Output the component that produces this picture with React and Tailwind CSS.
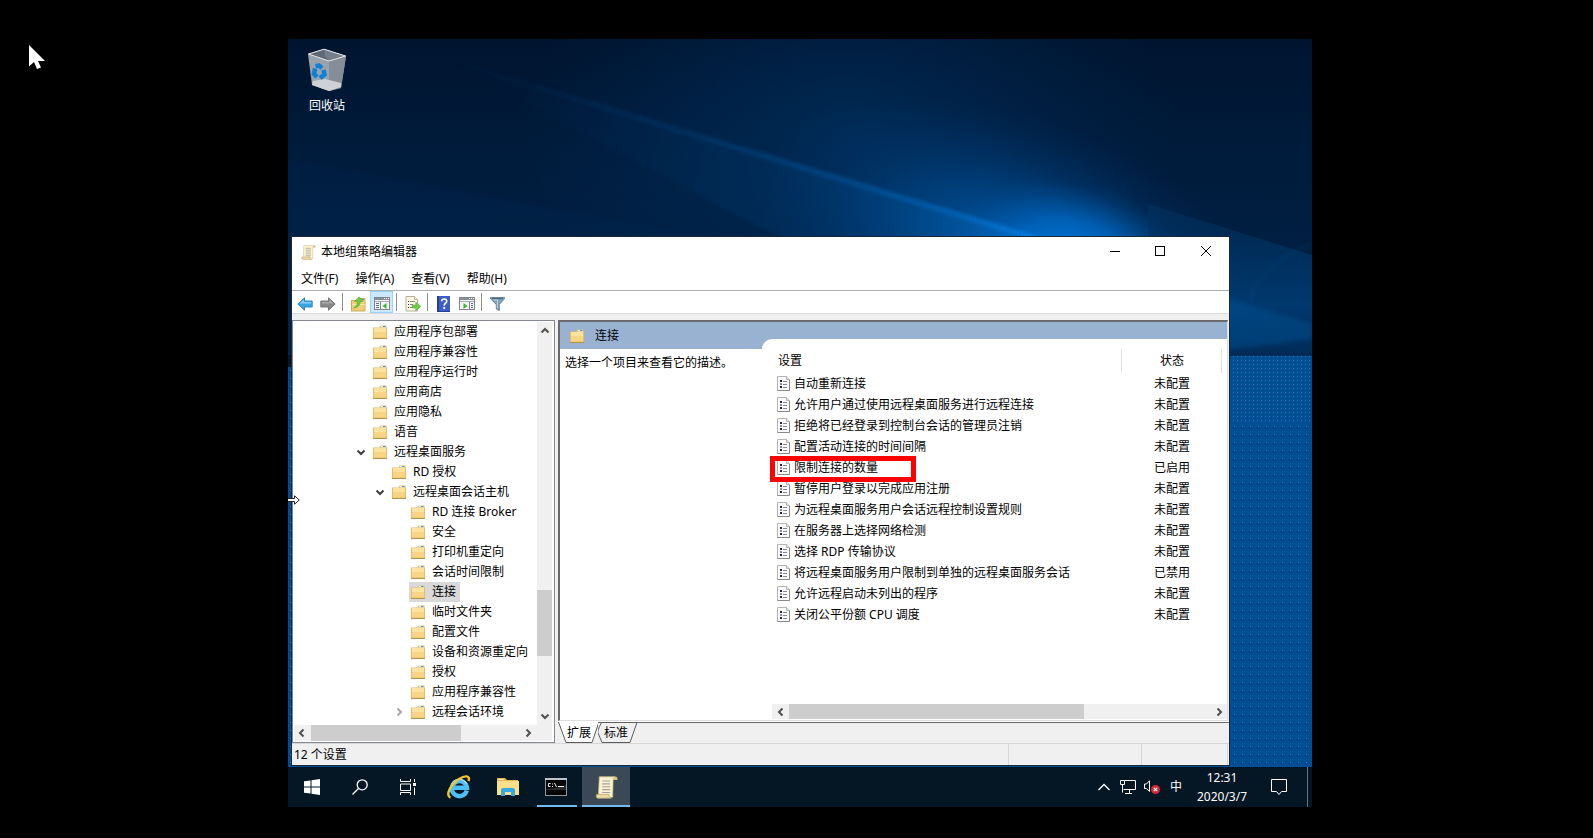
import React from "react";

const tree = [
  { label: "应用程序包部署", level: 1 },
  { label: "应用程序兼容性", level: 1 },
  { label: "应用程序运行时", level: 1 },
  { label: "应用商店", level: 1 },
  { label: "应用隐私", level: 1 },
  { label: "语音", level: 1 },
  { label: "远程桌面服务", level: 1, chevron: "open" },
  { label: "RD 授权", level: 2 },
  { label: "远程桌面会话主机", level: 2, chevron: "open" },
  { label: "RD 连接 Broker", level: 3 },
  { label: "安全", level: 3 },
  { label: "打印机重定向", level: 3 },
  { label: "会话时间限制", level: 3 },
  { label: "连接", level: 3, selected: true },
  { label: "临时文件夹", level: 3 },
  { label: "配置文件", level: 3 },
  { label: "设备和资源重定向", level: 3 },
  { label: "授权", level: 3 },
  { label: "应用程序兼容性", level: 3 },
  { label: "远程会话环境", level: 3, chevron: "closed" },
];

const settings = [
  ["自动重新连接", "未配置"],
  ["允许用户通过使用远程桌面服务进行远程连接", "未配置"],
  ["拒绝将已经登录到控制台会话的管理员注销", "未配置"],
  ["配置活动连接的时间间隔", "未配置"],
  ["限制连接的数量", "已启用"],
  ["暂停用户登录以完成应用注册", "未配置"],
  ["为远程桌面服务用户会话远程控制设置规则", "未配置"],
  ["在服务器上选择网络检测", "未配置"],
  ["选择 RDP 传输协议", "未配置"],
  ["将远程桌面服务用户限制到单独的远程桌面服务会话", "已禁用"],
  ["允许远程启动未列出的程序", "未配置"],
  ["关闭公平份额 CPU 调度", "未配置"],
];

const indent = { 1: "pl-[62px]", 2: "pl-[81px]", 3: "pl-[100px]" };

function Wallpaper() {
  return (
    <svg className="absolute inset-0 h-full w-full" viewBox="0 0 1024 768" preserveAspectRatio="none" aria-hidden="true">
      <defs>
        <linearGradient id="sky" x1="0" y1="0" x2="0" y2="1">
          <stop offset="0" stopColor="#00142f" />
          <stop offset="0.35" stopColor="#001b3b" />
          <stop offset="1" stopColor="#00244a" />
        </linearGradient>
        <radialGradient id="core" gradientUnits="userSpaceOnUse" cx="0" cy="0" r="1" gradientTransform="translate(785 212) rotate(12) scale(120 68)">
          <stop offset="0" stopColor="#0078d8" />
          <stop offset="0.45" stopColor="#0068c4" stopOpacity="0.75" />
          <stop offset="1" stopColor="#004c94" stopOpacity="0" />
        </radialGradient>
        <radialGradient id="glow" gradientUnits="userSpaceOnUse" cx="0" cy="0" r="1" gradientTransform="translate(725 205) rotate(18) scale(260 130)">
          <stop offset="0" stopColor="#0062b8" stopOpacity="0.85" />
          <stop offset="0.45" stopColor="#004a8e" stopOpacity="0.6" />
          <stop offset="1" stopColor="#003068" stopOpacity="0" />
        </radialGradient>
        <radialGradient id="wide" gradientUnits="userSpaceOnUse" cx="0" cy="0" r="1" gradientTransform="translate(560 90) scale(330 200)">
          <stop offset="0" stopColor="#003a70" stopOpacity="0.5" />
          <stop offset="1" stopColor="#003468" stopOpacity="0" />
        </radialGradient>
        <linearGradient id="beam" gradientUnits="userSpaceOnUse" x1="150" y1="18" x2="760" y2="203">
          <stop offset="0" stopColor="#0a4a86" stopOpacity="0" />
          <stop offset="0.4" stopColor="#0a4f90" stopOpacity="0.35" />
          <stop offset="0.75" stopColor="#0664b4" stopOpacity="0.75" />
          <stop offset="1" stopColor="#0a84ec" />
        </linearGradient>
        <linearGradient id="lower" gradientUnits="userSpaceOnUse" x1="0" y1="190" x2="0" y2="317">
          <stop offset="0" stopColor="#00315f" />
          <stop offset="0.6" stopColor="#004888" />
          <stop offset="1" stopColor="#003060" />
        </linearGradient>
        <pattern id="dots" width="8" height="8" patternUnits="userSpaceOnUse">
          <rect width="8" height="8" fill="#004f94" />
          <rect x="1" y="4" width="1" height="1" fill="#002a5e" />
          <rect x="2" y="3" width="1" height="1" fill="#3580c4" />
          <rect x="3" y="4" width="1" height="1" fill="#003f7c" />
        </pattern>
        <pattern id="fine" width="4" height="4" patternUnits="userSpaceOnUse">
          <rect width="4" height="4" fill="#004f94" />
          <rect x="1" y="1" width="1" height="1" fill="#2a74b8" />
          <rect x="3" y="3" width="1" height="1" fill="#004382" />
        </pattern>
        <filter id="soft" x="-10%" y="-50%" width="120%" height="200%">
          <feGaussianBlur stdDeviation="2" />
        </filter>
      </defs>
      <rect width="1024" height="768" fill="url(#dots)" />
      <rect x="940" y="310" width="84" height="72" fill="url(#fine)" />
      <rect width="1024" height="317" fill="url(#sky)" />
      <rect y="316" width="8" height="12" fill="#00172f" />
      <rect width="1024" height="317" fill="url(#wide)" />
      <rect x="400" width="624" height="317" fill="url(#glow)" />
      <rect x="600" width="424" height="317" fill="url(#core)" />
      <path d="M150 18 L760 203 L500 203 Z" fill="url(#beam)" opacity="0.25" filter="url(#soft)" />
      <path d="M150 18 L760 203" stroke="url(#beam)" strokeWidth="4" filter="url(#soft)" />
      <path d="M0 120 L430 200 L0 200 Z" fill="#002c58" opacity="0.2" filter="url(#soft)" />
      <path d="M860 165 L1024 216 L1040 340 L860 340 Z" fill="url(#lower)" opacity="0.6" clipPath="inset(0)" />
      <path d="M930 257 L1024 285 L1024 300 L930 312 Z" fill="#00569c" opacity="0.4" filter="url(#soft)" />
      <path d="M1024 205 Q975 222 962 262" stroke="#0a5a9c" strokeWidth="2" fill="none" opacity="0.25" filter="url(#soft)" />
      <rect x="940" y="317" width="84" height="65" fill="url(#fine)" />
    </svg>
  );
}

function Folder() {
  return (
    <svg className="h-[14px] w-[14px] shrink-0" viewBox="0 0 14 14" aria-hidden="true">
      <path d="M0 2.500h6.500L7.500.500H13.500V2.500H14V13.500H0z" fill="#dfbe72" />
      <path d="M8 1h5v1.500H7.500z" fill="#f4eccb" />
      <path d="M10 1.500h2.500" stroke="#3f97d8" />
      <rect x="1" y="3" width="12" height="5" fill="#fde2a0" />
      <rect x="1" y="7" width="12" height="5.500" fill="#f8d584" />
      <path d="M0 13.500h14" stroke="#b9934a" />
    </svg>
  );
}

function Scroll({ className }) {
  return (
    <svg className={className} viewBox="0 0 16 16" aria-hidden="true">
      <path d="M3 .5H14L12.600 3 12.300 14.800H2.300Z" fill="#fbf1cc" stroke="#c9b984" strokeWidth="0.5" />
      <path d="M13 .5h2q.8.5.6 2.200h-3.100z" fill="#d6c285" />
      <path d="M1 12.800h8.700q-.3 1.800 1.600 2.700H1.700Q.4 14.500 1 12.800z" fill="#ead9a0" stroke="#b8a46a" strokeWidth="0.5" />
      <path d="M5 3.500h5.500M5 5.500h5.500M5 7.500h5.500M5 9.500h5.500M5 11.500h5.500" stroke="#a3a39a" strokeWidth="0.8" />
    </svg>
  );
}

function PolicyIcon() {
  return (
    <svg className="h-[15px] w-[13px] shrink-0" viewBox="0 0 13 15" aria-hidden="true">
      <path d="M.5.5h9l3 3v11H.5z" fill="#fafafa" stroke="#b4b4b4" />
      <path d="M9.500.5v3h3" fill="#e4e4e4" stroke="#b4b4b4" />
      <path d="M12.500 4v10.500H.5" fill="none" stroke="#8a8a8a" />
      <path d="M3 4h2v2H3zM3 10h2v2H3z" fill="#23233a" />
      <path d="M3 7h2v2H3z" fill="#8c8c9c" />
      <path d="M6 5.500h4M6 8.500h4M6 11.500h4" stroke="#85859a" />
    </svg>
  );
}

function Arrow({ dir, color = "#505050" }) {
  const d = {
    up: "M1.500 6.500 5 3l3.500 3.500",
    down: "M1.500 3.500 5 7l3.500-3.500",
    left: "M6.500 1.500 3 5l3.500 3.500",
    right: "M3.500 1.500 7 5 3.500 8.500",
  }[dir];
  return (
    <svg className="h-[10px] w-[10px]" viewBox="0 0 10 10" fill="none" stroke={color} strokeWidth="2" aria-hidden="true">
      <path d={d} />
    </svg>
  );
}

function Separator() {
  return <span className="mr-1 ml-[3px] h-[18px] w-px bg-[#8d8d8d]" />;
}

function ToolButton({ label, active, children }) {
  return (
    <button
      aria-label={label}
      className={
        active
          ? "flex h-[22px] w-[23px] items-center justify-center border border-[#99d1ff] bg-[#cce8ff] pt-[2px]"
          : "flex h-[22px] w-[23px] items-center justify-center pt-[3px]"
      }
    >
      {children}
    </button>
  );
}

function PaneIcon({ flip }) {
  return (
    <svg className="h-[13px] w-[16px]" viewBox="0 0 16 13" aria-hidden="true">
      <rect x=".5" y=".5" width="15" height="12" fill="#f4f4f4" stroke="#82868c" />
      <rect x="1" y="1" width="14" height="2" fill="#8a9099" />
      <path d="M10 1.500h1M12 1.500h1M14 1.500h1" stroke="#fff" />
      <path d="M1 4.500h14" stroke="#a8adb4" />
      <path d={flip ? "M10.500 5v7" : "M6.500 5v7"} stroke="#82868c" />
      <path d={flip ? "M12 6.500h2M12 8.500h2M12 10.500h2" : "M2 6.500h3M2 8.500h3M2 10.500h3"} stroke="#5b6f95" />
      <path d={flip ? "M4.500 6v6l4-3z" : "M12.500 6v6l-4-3z"} fill="#3fb52f" />
    </svg>
  );
}

function Toolbar() {
  return (
    <div className="flex h-[23px] shrink-0 items-center border-b border-[#d9d9d9] bg-white pl-px">
      <ToolButton label="后退">
        <svg className="h-[14px] w-[16px]" viewBox="0 0 16 14" aria-hidden="true">
          <path d="M.8 7 7.500.8V4h7.700v6H7.500v3.200z" fill="#35a5ea" stroke="#3b86b8" />
          <path d="M2.500 6.500 6.700 2.600V5h7.500v1.500z" fill="#86d0fa" />
        </svg>
      </ToolButton>
      <ToolButton label="前进">
        <svg className="h-[14px] w-[16px]" viewBox="0 0 16 14" aria-hidden="true">
          <path d="M15.200 7 8.500.8V4H.8v6h7.700v3.200z" fill="#8a8a8a" stroke="#757575" />
          <path d="M13.500 6.500 9.300 2.600V5H1.800v1.500z" fill="#aaa" />
        </svg>
      </ToolButton>
      <Separator />
      <ToolButton label="上一级">
        <svg className="h-[16px] w-[15px]" viewBox="0 0 15 16" aria-hidden="true">
          <path d="M.5 4.500h6l1.500-2h6v12.500H.5z" fill="#f0cf7c" stroke="#cfa95a" />
          <path d="M1 8.500h13" stroke="#fae6ac" />
          <path d="M10.500 3.500H13" stroke="#3f97d8" />
          <path d="M2.500 12Q6.500 10 6.300 5.500H3.500L8 .8l4 4.700H9.500Q9 11 2.500 12z" fill="#6ccc3c" stroke="#45a02a" strokeWidth=".5" />
        </svg>
      </ToolButton>
      <ToolButton label="显示/隐藏控制台树" active>
        <PaneIcon />
      </ToolButton>
      <Separator />
      <ToolButton label="导出列表">
        <svg className="h-[16px] w-[16px]" viewBox="0 0 16 16" aria-hidden="true">
          <path d="M1 .5h8.500l3 3v11.500H1z" fill="#fbf8e4" stroke="#b4b09a" />
          <path d="M9.500.5v3h3" fill="#fff" stroke="#b4b09a" />
          <path d="M3 5.500h1M3 8.500h1M3 11.500h1" stroke="#333" />
          <path d="M5 5.500h5M5 8.500h3M5 11.500h3" stroke="#8b8b8b" />
          <path d="M7.500 9h3.300V6.300L15.700 10.500 10.800 14.700V12H7.500z" fill="#6fd048" stroke="#4ba836" strokeWidth=".6" />
        </svg>
      </ToolButton>
      <Separator />
      <ToolButton label="帮助">
        <svg className="h-[16px] w-[13px]" viewBox="0 0 13 16" aria-hidden="true">
          <rect width="13" height="16" fill="#3b5cc9" />
          <rect width="2" height="16" fill="#243f96" />
          <path d="M0 15.500h13" stroke="#243f96" />
          <path d="M4.700 5.200Q4.700 3 7.200 3t2.500 2.200Q9.700 6.500 8.300 7.500 7.200 8.300 7.200 9.800" fill="none" stroke="#fff" strokeWidth="1.700" />
          <rect x="6.300" y="11" width="1.900" height="2" fill="#fff" />
        </svg>
      </ToolButton>
      <ToolButton label="显示/隐藏操作窗格">
        <PaneIcon flip />
      </ToolButton>
      <Separator />
      <ToolButton label="筛选器">
        <svg className="h-[14px] w-[15px]" viewBox="0 0 15 14" aria-hidden="true">
          <path d="M.5.500h14v1.300L9.300 7.500v6l-3-1.500V7.500L.5 1.800z" fill="#7fa0b8" stroke="#56768e" strokeWidth=".8" />
          <path d="M2 1.500h11" stroke="#48657e" />
          <path d="M3.500 3h4L7.300 11.500" fill="none" stroke="#bcd4e4" />
        </svg>
      </ToolButton>
    </div>
  );
}

function TreePane() {
  return (
    <nav className="flex w-[263px] shrink-0 flex-col border border-[#828790] bg-white pr-[2px] pb-px">
      <div className="flex flex-1">
        <ul className="flex-1 pt-px">
          {tree.map((node, i) => (
            <li key={i} className={`flex h-5 items-center whitespace-nowrap ${indent[node.level]}`}>
              {node.chevron ? (
                <button className="flex w-3 shrink-0 justify-center" aria-label={`展开或折叠 ${node.label}`}>
                  <Arrow dir={node.chevron === "open" ? "down" : "right"} color={node.chevron === "open" ? "#404040" : "#a6a6a6"} />
                </button>
              ) : (
                <span className="w-3 shrink-0" />
              )}
              <button className={`ml-1 flex h-5 items-center gap-[7px] pr-1 pl-[2px] ${node.selected ? "bg-[#d9d9d9]" : ""}`}>
                <Folder />
                {node.label}
              </button>
            </li>
          ))}
        </ul>
        <div className="mt-px flex w-[15px] shrink-0 flex-col items-center bg-[#f0f0f0]">
          <button aria-label="向上滚动" className="flex h-[18px] items-center"><Arrow dir="up" /></button>
          <div className="flex w-full flex-1 flex-col">
            <div className="flex-[249]" />
            <div className="flex-[65] bg-[#cdcdcd]" />
            <div className="flex-[50]" />
          </div>
          <button aria-label="向下滚动" className="flex h-[19px] items-center"><Arrow dir="down" /></button>
        </div>
      </div>
      <div className="ml-px flex h-4 shrink-0 bg-[#f0f0f0]">
        <button aria-label="向左滚动" className="flex w-4 items-center justify-center"><Arrow dir="left" /></button>
        <div className="flex flex-1">
          <div className="ml-px flex-[150] bg-[#cdcdcd]" />
          <div className="flex-[58]" />
        </div>
        <button aria-label="向右滚动" className="mr-4 flex w-[17px] items-center justify-center"><Arrow dir="right" /></button>
      </div>
    </nav>
  );
}

function SettingsTable() {
  return (
    <table className="mt-[10px] w-full table-fixed border-collapse">
      <thead>
        <tr className="h-6">
          <th className="border-r border-[#e2e2e2] pl-4 text-left font-normal">设置</th>
          <th className="w-[100px] border-r border-[#e2e2e2] pl-[2px] text-center font-normal">状态</th>
          <th className="w-[6px]" />
        </tr>
      </thead>
      <tbody>
        {settings.map(([name, state]) => (
          <tr key={name} className="h-[21px]">
            <td className="relative p-0 pl-[15px]">
              <span className="flex items-center gap-1 whitespace-nowrap">
                <PolicyIcon />
                {name}
              </span>
              {name === "限制连接的数量" && (
                <span className="absolute -top-px left-2 z-10 h-[26px] w-[146px] border-[5px] border-[#fe0000]" />
              )}
            </td>
            <td className="p-0 pl-[2px] text-center">{state}</td>
            <td />
          </tr>
        ))}
      </tbody>
    </table>
  );
}

function DetailPane() {
  return (
    <section className="ml-[3px] flex min-w-0 flex-1 flex-col">
      <div className="mr-px flex flex-1 border-t-2 border-r border-b border-l-2 border-t-[#696969] border-r-[#dcdcdc] border-b-[#dcdcdc] border-l-[#696969] bg-white">
        <div className="flex w-[202px] shrink-0 flex-col">
          <h2 className="flex h-[27px] items-center gap-[11px] bg-[#99b2d1] pl-[10px]">
            <Folder />
            连接
          </h2>
          <p className="pt-1 pl-[5px]">选择一个项目来查看它的描述。</p>
        </div>
        <div className="flex min-w-0 flex-1 flex-col bg-[#99b2d1] pt-[17px]">
          <div className="flex flex-1 flex-col rounded-tl-[10px] bg-white">
            <SettingsTable />
            <div className="mt-auto mb-px ml-[10px] flex h-[15px] bg-[#f0f0f0]">
              <button aria-label="向左滚动" className="flex w-[17px] items-center justify-center"><Arrow dir="left" /></button>
              <div className="flex flex-1">
                <div className="flex-[295] bg-[#cdcdcd]" />
                <div className="flex-[126]" />
              </div>
              <button aria-label="向右滚动" className="flex w-[17px] items-center justify-center"><Arrow dir="right" /></button>
            </div>
          </div>
        </div>
      </div>
      <div className="h-px shrink-0 bg-white" />
      <div className="flex h-[21px] shrink-0 border-t border-[#696969]">
        <button className="relative -mt-px h-[21px] w-10">
          <svg className="absolute inset-0 h-full w-full" viewBox="0 0 40 21" aria-hidden="true">
            <path d="M0 0 8 20.500h26L40 0z" fill="#fff" />
            <path d="M.5 0 8 20.500h26L41 0" fill="none" stroke="#5c5c5c" />
          </svg>
          <span className="relative pl-[2px]">扩展</span>
        </button>
        <button className="relative -mt-px h-[21px] w-10">
          <svg className="absolute inset-0 h-full w-full" viewBox="0 0 40 21" aria-hidden="true">
            <path d="M3.500.5Q-1 9 0 11l4 9.500h28L39 .5z" fill="#f0f0f0" stroke="#5c5c5c" />
          </svg>
          <span className="relative pr-1">标准</span>
        </button>
      </div>
    </section>
  );
}

function EditorWindow() {
  return (
    <div className="relative mr-[82px] mb-px ml-[3px] flex flex-1 flex-col border border-[#16283a] bg-[#f0f0f0]">
      <div className="flex h-[30px] shrink-0 items-center bg-white pl-[9px]">
        <Scroll className="mr-[5px] h-[15px] w-[15px]" />
        <h1 className="flex-1">本地组策略编辑器</h1>
        <button aria-label="最小化" className="flex h-7 w-11 items-center justify-center self-start">
          <svg className="h-[10px] w-[10px]" viewBox="0 0 10 10"><path d="M0 5.500h10" stroke="#000" /></svg>
        </button>
        <button aria-label="最大化" className="flex h-7 w-[46px] items-center justify-center self-start">
          <svg className="h-[10px] w-[10px]" viewBox="0 0 10 10"><rect x=".5" y=".5" width="9" height="9" fill="none" stroke="#000" /></svg>
        </button>
        <button aria-label="关闭" className="flex h-7 w-[46px] items-center justify-center self-start">
          <svg className="h-[10px] w-[10px]" viewBox="0 0 10 10"><path d="M0 0 10 10M10 0 0 10" stroke="#000" /></svg>
        </button>
      </div>
      <div className="flex h-6 shrink-0 items-center gap-[17px] border-b border-[#aeaeae] bg-white pl-[9px]">
        <button>文件(F)</button>
        <button>操作(A)</button>
        <button>查看(V)</button>
        <button>帮助(H)</button>
      </div>
      <Toolbar />
      <div className="flex flex-1 pt-[6px]">
        <TreePane />
        <DetailPane />
      </div>
      <div className="flex h-[22px] shrink-0 items-stretch border-t border-[#d7d7d7]">
        <span className="flex flex-1 items-center border-r border-[#d7d7d7] pl-[2px]">12 个设置</span>
        <span className="w-[133px] border-r border-[#d7d7d7]" />
        <span className="mr-px w-[86px] border-r border-[#d7d7d7]" />
      </div>
    </div>
  );
}

function TaskButton({ label, className = "", children }) {
  return (
    <button aria-label={label} className={`flex h-10 w-12 items-center justify-center ${className}`}>
      {children}
    </button>
  );
}

function Taskbar() {
  return (
    <footer className="relative flex h-10 shrink-0 bg-[#051725] text-white">
      <TaskButton label="开始">
        <svg className="h-4 w-4" viewBox="0 0 16 16" fill="#fff" aria-hidden="true">
          <path d="M0 2.300 6.500 1.400v6.100H0zM7.500 1.250 16 0v7.500H7.500zM0 8.500h6.500v6.100L0 13.700zM7.500 8.500H16V16l-8.500-1.200z" />
        </svg>
      </TaskButton>
      <TaskButton label="搜索">
        <svg className="h-4 w-4" viewBox="0 0 16 16" fill="none" stroke="#fff" strokeWidth="1.300" aria-hidden="true">
          <circle cx="10.200" cy="5.800" r="5" />
          <path d="M6.700 9.300.5 15.500" />
        </svg>
      </TaskButton>
      <TaskButton label="任务视图">
        <svg className="h-4 w-4" viewBox="0 0 16 16" fill="none" stroke="#fff" aria-hidden="true">
          <path d="M.5 0v2.500h10V0M.5 5h10v6.500H.5zM.5 16v-2.500h10V16M14.500 0v3M14.500 8.500V16" />
          <rect x="13" y="4" width="3" height="3" fill="#fff" stroke="none" />
        </svg>
      </TaskButton>
      <TaskButton label="Internet Explorer" className="ml-[3px]">
        <svg className="h-6 w-6" viewBox="0 0 24 24" fill="none" aria-hidden="true">
          <path d="M19.800 15.500A7.600 7.600 0 1 1 20 12.800H7" stroke="#4fc0f5" strokeWidth="4.400" />
          <path d="M19.500 9A8 8 0 0 0 5 9" stroke="#a4e4ff" strokeWidth="1.400" />
          <path d="M3.500 22.500C-2 20.500 3.500 9.500 12 4 18 .2 23.500.2 21.500 6" stroke="#f6c52e" strokeWidth="2.400" />
        </svg>
      </TaskButton>
      <TaskButton label="文件资源管理器" className="ml-px">
        <svg className="h-[18px] w-[22px]" viewBox="0 0 22 18" aria-hidden="true">
          <path d="M0 0h8l2 2h11v3H0z" fill="#e8b64c" />
          <path d="M0 3h22v14H0z" fill="#fbe08a" />
          <path d="M4 18V12q0-2 2-2h10q2 0 2 2v6h-4v-4H8v4z" fill="#35a8e0" />
          <path d="M1.500 1.500h5" stroke="#fff3c0" />
        </svg>
      </TaskButton>
      <TaskButton label="命令提示符" className="relative ml-px pr-[2px]">
        <svg className="h-[18px] w-[22px]" viewBox="0 0 22 18" aria-hidden="true">
          <rect width="22" height="18" fill="#8e969c" />
          <rect y="0" width="22" height="2" fill="#b8c4cc" />
          <rect x="1" y="2" width="20" height="15" fill="#050505" />
          <path d="M1 11Q12 10 21 7v5H1z" fill="#2a2a2a" />
          <path d="M5.500 5.500h-2v3h2M7.500 5.500v1M7.500 8v1M9.500 5l2 4M13 8.500h6" fill="none" stroke="#f2f2f2" />
        </svg>
        <span className="absolute inset-x-1 bottom-0 h-[2px] bg-[#76b9ed]" />
      </TaskButton>
      <TaskButton label="本地组策略编辑器" className="relative ml-px bg-[#3b4855]">
        <Scroll className="h-[23px] w-[23px]" />
        <span className="absolute inset-x-0 bottom-0 h-[2px] bg-[#76b9ed]" />
      </TaskButton>
      <div className="ml-auto flex items-center">
        <button aria-label="显示隐藏的图标" className="flex w-6 justify-center">
          <svg className="h-[8px] w-[12px]" viewBox="0 0 12 8" fill="none" stroke="#fff" strokeWidth="1.300"><path d="M.5 7 6 1.500 11.500 7" /></svg>
        </button>
        <button aria-label="网络" className="flex w-6 justify-center">
          <svg className="h-[14px] w-4" viewBox="0 0 16 14" fill="none" stroke="#fff" aria-hidden="true">
            <path d="M5 .5h10.500v9H3.500M.5.500h4v4h-4zM2.500 4.500v8M9.500 9.500v4M5 13.500h7" />
          </svg>
        </button>
        <button aria-label="音量" className="flex w-6 justify-center">
          <svg className="h-[14px] w-4" viewBox="0 0 16 14" fill="none" aria-hidden="true">
            <path d="M.5 4h2L5.500.8v10.700L2.500 8.500h-2z" stroke="#fff" />
            <circle cx="11.500" cy="9.500" r="4.500" fill="#d9262e" />
            <path d="M9.800 7.800l3.400 3.400M13.200 7.800l-3.400 3.400" stroke="#fff" strokeWidth="1.200" />
          </svg>
        </button>
        <button className="w-6 text-center">中</button>
        <button className="w-[68px] text-center leading-[19px]">
          12:31
          <br />
          2020/3/7
        </button>
        <button aria-label="通知" className="mr-[5px] flex w-[46px] justify-center">
          <svg className="h-4 w-4" viewBox="0 0 16 16" fill="none" stroke="#fff" aria-hidden="true">
            <path d="M.5.500h15v12H10.500L8 15.500 5.500 12.500H.5z" />
          </svg>
        </button>
        <button aria-label="显示桌面" className="h-full w-[5px] border-l border-[#69737c]" />
      </div>
    </footer>
  );
}

export default function App() {
  return (
    <main className="relative flex min-h-screen flex-col bg-black pt-[39px] pr-[281px] pb-[31px] pl-72 font-['Noto_Sans','Noto_Sans_CJK_SC',sans-serif] text-xs leading-5 text-black">
      <div className="relative flex flex-1 flex-col overflow-hidden">
        <Wallpaper />
        <div className="relative h-[197px] shrink-0 pt-[9px]">
          <button className="flex w-[78px] flex-col items-center gap-1 text-white">
            <svg className="h-[44px] w-[38px]" viewBox="0 0 38 44" aria-hidden="true">
              <path d="M0 6 16 1 38 8 33 40 21 43 4 37z" fill="#9aa2ab" />
              <path d="M0 6 16 1 38 8 21 13z" fill="#5f6874" />
              <path d="M16 1 38 8 33 9 21 13 17 8z" fill="#757e89" />
              <path d="M21 13 38 8 33 40 21 43z" fill="#858e98" />
              <path d="M4 37 5 33 17 31 33 35V39L21 43z" fill="#cfd2d4" />
              <path d="M.5 6 16 1.200 37.500 8 21 13z" fill="none" stroke="#e6e8ea" />
              <g fill="none" stroke="#0c80d8" strokeWidth="4.500">
                <path d="M7.500 18 11 17.500 14 20" />
                <path d="M7 20.500 6 26 9 29" />
                <path d="M15.500 22 16.500 26.500 12 30" />
              </g>
            </svg>
            回收站
          </button>
        </div>
        <EditorWindow />
        <Taskbar />
      </div>
      <svg className="absolute top-[45px] left-[29px] h-6 w-4" viewBox="0 0 16 24" fill="#fff" aria-hidden="true">
        <path d="M0 0v21.500l5-4.500 3 7 4-1.500-3-6.500h7z" />
      </svg>
      <svg className="absolute top-[495px] left-72 h-[10px] w-[12px]" viewBox="0 0 12 10" fill="#fff" stroke="#222" aria-hidden="true">
        <path d="M0 3.500h6.500V.8L11.300 5 6.500 9.200V6.500H0" />
      </svg>
    </main>
  );
}
